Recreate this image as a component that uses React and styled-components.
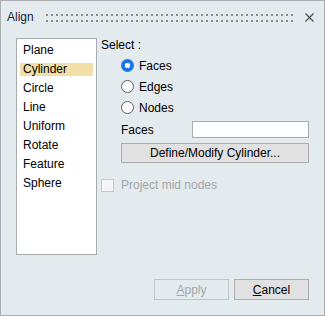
import React, { useState } from "react";
import styled, { createGlobalStyle } from "styled-components";

const GlobalStyle = createGlobalStyle`
  html, body {
    margin: 0;
    padding: 0;
    background: #e4ebee;
  }
  body {
    font-family: "Liberation Sans", Arial, sans-serif;
    font-size: 12px;
  }
`;

const items = [
  "Plane",
  "Cylinder",
  "Circle",
  "Line",
  "Uniform",
  "Rotate",
  "Feature",
  "Sphere",
];

const modes = ["Faces", "Edges", "Nodes"];

const App = () => {
  const [selected, setSelected] = useState("Cylinder");
  const [mode, setMode] = useState("Faces");

  return (
    <>
      <GlobalStyle />
      <Window>
        <TitleBar>
          <Title>Align</Title>
          <Grip />
          <CloseButton>
            <svg width="9" height="9" viewBox="0 0 9 9">
              <path
                d="M0.5 0.5 L8.5 8.5 M8.5 0.5 L0.5 8.5"
                stroke="#4a4a4a"
                strokeWidth="1.1"
              />
            </svg>
          </CloseButton>
        </TitleBar>

        <Body>
          <ListBox>
            {items.map((item) => (
              <ListItem
                key={item}
                $active={item === selected}
                onClick={() => setSelected(item)}
              >
                <span>{item}</span>
              </ListItem>
            ))}
          </ListBox>

          <Panel>
            <SectionLabel>Select :</SectionLabel>
            <RadioGroup>
              {modes.map((m) => (
                <RadioRow key={m} onClick={() => setMode(m)}>
                  <RadioDot $checked={m === mode} />
                  {m}
                </RadioRow>
              ))}
            </RadioGroup>

            <FieldRow>
              <FieldLabel>Faces</FieldLabel>
              <TextInput />
            </FieldRow>

            <WideButton>Define/Modify Cylinder...</WideButton>

            <CheckRow>
              <CheckBox />
              Project mid nodes
            </CheckRow>
          </Panel>
        </Body>

        <Footer>
          <DialogButton disabled>
            <u>A</u>pply
          </DialogButton>
          <DialogButton>
            <u>C</u>ancel
          </DialogButton>
        </Footer>
      </Window>
    </>
  );
};

const Window = styled.div`
  box-sizing: border-box;
  width: 325px;
  height: 316px;
  border: 1px solid #a9adb0;
  background: #e4ebee;
  display: flex;
  flex-direction: column;
  color: #000;
`;

const TitleBar = styled.div`
  height: 30px;
  display: flex;
  align-items: center;
  padding: 0 10px 0 6px;
`;

const Title = styled.div`
  font-size: 12px;
  color: #1c1c3c;
  margin-top: 1px;
`;

const Grip = styled.div`
  flex: 1;
  height: 8px;
  margin: 3px 0 0 12px;
  max-width: 249px;
  background-image: conic-gradient(
    at 2px 2px,
    transparent 75%,
    #878b8f 0
  );
  background-size: 5px 6px;
`;

const CloseButton = styled.div`
  margin-left: auto;
  width: 9px;
  height: 9px;
  margin-top: 3px;
  display: flex;
`;

const Body = styled.div`
  flex: 1;
  display: flex;
  padding: 7px 0 0 15px;
`;

const ListBox = styled.div`
  box-sizing: border-box;
  width: 81px;
  height: 217px;
  background: #fff;
  border: 1px solid #a7acb0;
  padding: 2px 3px 0 3px;
  display: flex;
  flex-direction: column;
`;

const ListItem = styled.div`
  height: 19px;
  display: flex;
  align-items: center;

  > span {
    flex: 1;
    height: 13px;
    line-height: 13px;
    padding-left: 3px;
    background: ${(p) => (p.$active ? "#f1dfa8" : "transparent")};
  }
`;

const Panel = styled.div`
  flex: 1;
  margin-left: 4px;
  padding-right: 15px;
  display: flex;
  flex-direction: column;
`;

const SectionLabel = styled.div`
  line-height: 14px;
`;

const RadioGroup = styled.div`
  display: flex;
  flex-direction: column;
  padding-left: 20px;
  margin-top: 3px;
`;

const RadioRow = styled.div`
  height: 21px;
  display: flex;
  align-items: center;
  gap: 5px;
`;

const RadioDot = styled.span`
  box-sizing: border-box;
  width: 13px;
  height: 13px;
  border-radius: 50%;
  border: ${(p) => (p.$checked ? "none" : "1px solid #5c5c5c")};
  background: ${(p) =>
    p.$checked
      ? "radial-gradient(circle, #fff 0 2.5px, #1b74e8 3px)"
      : "#fff"};
`;

const FieldRow = styled.div`
  display: flex;
  align-items: center;
  padding-left: 20px;
  margin-top: 3px;
  height: 17px;
`;

const FieldLabel = styled.div`
  width: 71px;
`;

const TextInput = styled.div`
  box-sizing: border-box;
  width: 117px;
  height: 17px;
  background: #fff;
  border: 1px solid #a8acb0;
`;

const WideButton = styled.div`
  box-sizing: border-box;
  margin: 5px 0 0 20px;
  height: 20px;
  border: 1px solid #adadad;
  background: #e1e1e1;
  display: flex;
  align-items: center;
  justify-content: center;
`;

const CheckRow = styled.div`
  display: flex;
  align-items: center;
  gap: 7px;
  margin-top: 15px;
  color: #a3a6a9;
`;

const CheckBox = styled.span`
  box-sizing: border-box;
  width: 13px;
  height: 13px;
  border: 1px solid #c6c9cb;
  background: #f3f5f6;
`;

const Footer = styled.div`
  display: flex;
  justify-content: flex-end;
  gap: 5px;
  padding: 0 15px 15px 0;
`;

const DialogButton = styled.div`
  box-sizing: border-box;
  width: 75px;
  height: 21px;
  display: flex;
  align-items: center;
  justify-content: center;
  border: 1px solid ${(p) => (p.disabled ? "#c3c6c8" : "#adadad")};
  background: ${(p) => (p.disabled ? "#e4ebee" : "#e1e1e1")};
  color: ${(p) => (p.disabled ? "#a3a6a9" : "#000")};
`;

export default App;
